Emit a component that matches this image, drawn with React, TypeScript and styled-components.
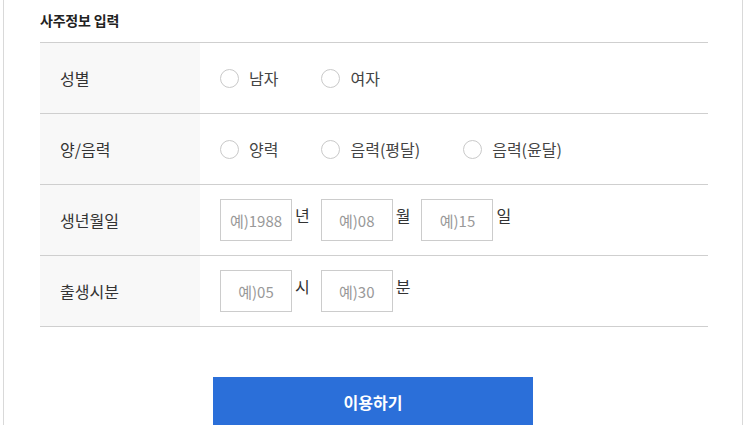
import React from "react";
import styled, { createGlobalStyle } from "styled-components";

const GlobalStyle = createGlobalStyle`
  html, body {
    margin: 0;
    padding: 0;
    background: #ffffff;
    overflow: hidden;
  }
  body {
    font-family: "Noto Sans CJK KR", "Noto Sans", sans-serif;
    color: #333;
  }
  * { box-sizing: border-box; }
`;

const Page = styled.div`
  width: 740px;
  min-height: 440px;
  margin: 0 auto;
  border-left: 1px solid #d9d9d9;
  border-right: 1px solid #d9d9d9;
  padding: 10px 34px 0 36px;
  display: flex;
  flex-direction: column;
`;

const Title = styled.h2`
  margin: 0;
  font-size: 14px;
  line-height: 20px;
  font-weight: 700;
  color: #222;
  letter-spacing: -0.2px;
`;

const Table = styled.div`
  margin-top: 12px;
  border-top: 1px solid #cfcfcf;
  display: flex;
  flex-direction: column;
`;

const Row = styled.div`
  display: grid;
  grid-template-columns: 160px 1fr;
  height: 71px;
  border-bottom: 1px solid #cfcfcf;
`;

const Label = styled.div`
  background: #f8f8f8;
  display: flex;
  align-items: center;
  padding-left: 20px;
  font-size: 16px;
  color: #333;
`;

const Value = styled.div`
  display: flex;
  align-items: center;
  padding-left: 20px;
`;

const RadioGroup = styled.div`
  display: flex;
  align-items: center;
  gap: 43px;
`;

const RadioItem = styled.label`
  display: flex;
  align-items: center;
  font-size: 16px;
  color: #444;
  cursor: pointer;
`;

const RadioCircle = styled.span`
  width: 19px;
  height: 19px;
  border-radius: 50%;
  border: 1.5px solid #c9c9c9;
  background: #fff;
  margin-right: 10px;
  flex-shrink: 0;
`;

const Field = styled.input`
  width: 72px;
  height: 42px;
  border: 1px solid #cccccc;
  background: #fff;
  text-align: center;
  font-family: "Noto Sans CJK KR", "Noto Sans", sans-serif;
  font-size: 15px;
  color: #333;
  padding: 0;
  outline: none;
  &::placeholder {
    color: #999;
  }
`;

const Unit = styled.span<{ $last?: boolean }>`
  font-size: 16px;
  color: #333;
  margin: 0 ${(p) => (p.$last ? 0 : 11)}px 10px 3px;
`;

const ButtonRow = styled.div`
  display: flex;
  justify-content: center;
  margin-top: 50px;
  padding-right: 2px;
`;

const SubmitButton = styled.button`
  width: 320px;
  height: 50px;
  border: none;
  background: #2b6fd9;
  color: #fff;
  font-family: "Noto Sans CJK KR", "Noto Sans", sans-serif;
  font-size: 16px;
  font-weight: 700;
  cursor: pointer;
`;

const Radio = ({ label }: { label: string }) => (
  <RadioItem>
    <RadioCircle />
    {label}
  </RadioItem>
);

const Input = ({ ph, unit, last }: { ph: string; unit: string; last?: boolean }) => (
  <>
    <Field placeholder={ph} />
    <Unit $last={last}>{unit}</Unit>
  </>
);

export default function App() {
  return (
    <>
      <GlobalStyle />
      <Page>
        <Title>사주정보 입력</Title>
        <Table>
          <Row>
            <Label>성별</Label>
            <Value>
              <RadioGroup>
                <Radio label="남자" />
                <Radio label="여자" />
              </RadioGroup>
            </Value>
          </Row>
          <Row>
            <Label>양/음력</Label>
            <Value>
              <RadioGroup>
                <Radio label="양력" />
                <Radio label="음력(평달)" />
                <Radio label="음력(윤달)" />
              </RadioGroup>
            </Value>
          </Row>
          <Row>
            <Label>생년월일</Label>
            <Value>
              <Input ph="예)1988" unit="년" />
              <Input ph="예)08" unit="월" />
              <Input ph="예)15" unit="일" last />
            </Value>
          </Row>
          <Row>
            <Label>출생시분</Label>
            <Value>
              <Input ph="예)05" unit="시" />
              <Input ph="예)30" unit="분" last />
            </Value>
          </Row>
        </Table>
        <ButtonRow>
          <SubmitButton>이용하기</SubmitButton>
        </ButtonRow>
      </Page>
    </>
  );
}
